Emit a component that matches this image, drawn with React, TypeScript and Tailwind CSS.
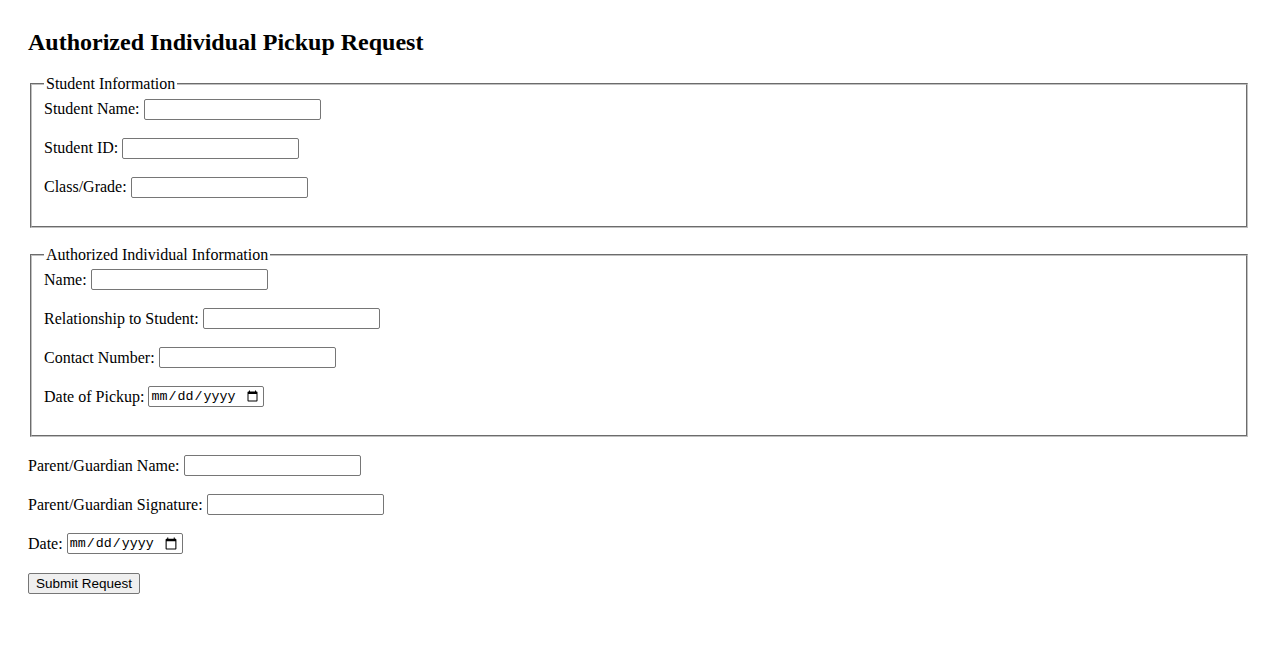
import React from "react";

const textInput =
  "h-[21px] w-[177px] border border-[#767676] rounded-[2px] bg-white px-[2px] py-[1px] text-[13.33px] font-['Liberation_Sans',Arial,sans-serif] text-black outline-none";
const dateInput =
  "h-[21px] w-[116px] border border-[#767676] rounded-[2px] bg-white pl-[1px] pr-[2px] py-[1px] text-[13.33px] font-['Liberation_Mono','DejaVu_Sans_Mono',monospace] text-black outline-none";

function Row({ label, type = "text" }: { label: string; type?: "text" | "date" }) {
  return (
    <div className="flex h-[21px] items-center">
      <label className="whitespace-pre">{label + ": "}</label>
      <input type={type} className={type === "date" ? dateInput : textInput} />
    </div>
  );
}

function Fieldset({ legend, children, className = "" }: { legend: string; children: React.ReactNode; className?: string }) {
  return (
    <fieldset className={"mx-[2px] border-2 [border-style:groove] border-[#c0c0c0] px-3 pt-[5.6px] pb-[28px] " + className}>
      <legend className="px-[2px] leading-[18px]">{legend}</legend>
      <div className="flex flex-col gap-[18px]">{children}</div>
    </fieldset>
  );
}

export default function App() {
  return (
    <div className="min-h-[650px] bg-white px-[28px] pt-[28px] font-['Liberation_Serif','Times_New_Roman',serif] text-[16px] text-black">
      <h2 className="mb-[19px] text-[24px] font-bold leading-[28px]">Authorized Individual Pickup Request</h2>
      <form className="flex flex-col" onSubmit={(e) => e.preventDefault()}>
        <Fieldset legend="Student Information">
          <Row label="Student Name" />
          <Row label="Student ID" />
          <Row label="Class/Grade" />
        </Fieldset>
        <Fieldset legend="Authorized Individual Information" className="mt-[18px]">
          <Row label="Name" />
          <Row label="Relationship to Student" />
          <Row label="Contact Number" />
          <Row label="Date of Pickup" type="date" />
        </Fieldset>
        <div className="mt-[18px] flex flex-col items-start gap-[18px]">
          <Row label="Parent/Guardian Name" />
          <Row label="Parent/Guardian Signature" />
          <Row label="Date" type="date" />
          <button
            type="submit"
            className="mt-[1px] h-[21px] rounded-[2px] border border-[#767676] bg-[#efefef] px-[7px] text-[13.5px] leading-[15px] font-['Liberation_Sans',Arial,sans-serif] text-black"
          >
            Submit Request
          </button>
        </div>
      </form>
    </div>
  );
}
